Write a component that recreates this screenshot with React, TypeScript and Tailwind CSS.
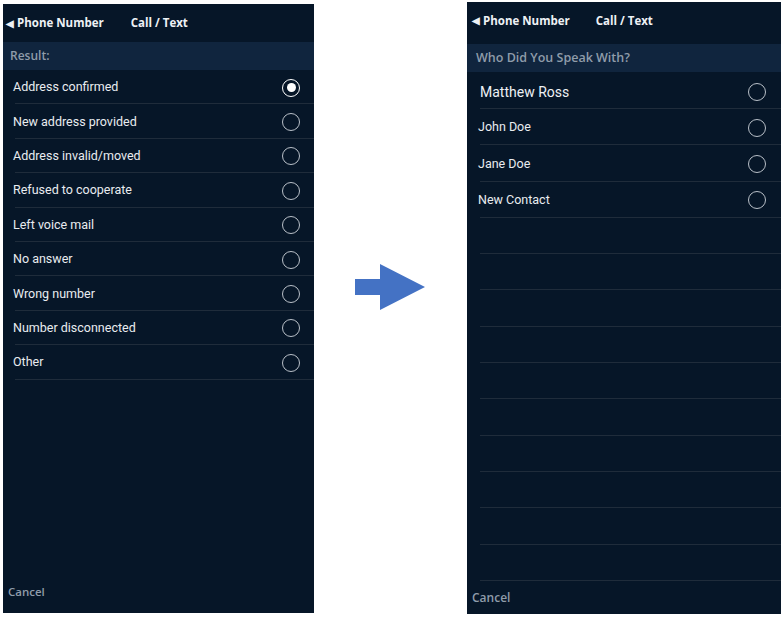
const leftOptions = [
  "Address confirmed",
  "New address provided",
  "Address invalid/moved",
  "Refused to cooperate",
  "Left voice mail",
  "No answer",
  "Wrong number",
  "Number disconnected",
  "Other",
];

const contacts = ["John Doe", "Jane Doe", "New Contact"];

// Montserrat-like headings; Open Sans is the widest close match installed
const head = { fontFamily: "'Open Sans', Lato, sans-serif" };
const body = { fontFamily: "Roboto, 'Liberation Sans', sans-serif" };

function Radio({ checked = false }: { checked?: boolean }) {
  return (
    <span
      className={`flex h-[18px] w-[18px] items-center justify-center rounded-full border-[1.5px] ${
        checked ? "border-white" : "border-[#b9c0c8]"
      }`}
    >
      {checked && <span className="h-[9px] w-[9px] rounded-full bg-white" />}
    </span>
  );
}

function TopBar({ gap, className }: { gap: string; className: string }) {
  return (
    <div className={`flex items-center text-[11.5px] font-bold text-[#eef1f5] ${className}`} style={head}>
      <span className="flex items-center gap-[3px]">
        <span className="text-[10px]">◀</span>
        <span>Phone Number</span>
      </span>
      <span className={gap}>Call / Text</span>
    </div>
  );
}

function LeftPanel() {
  return (
    <div className="ml-[3px] mt-[4px] flex h-[609px] w-[311px] flex-col bg-[#061628]">
      <TopBar gap="ml-[27px]" className="h-[38px] pl-[3px]" />
      <div className="flex h-[28px] items-center bg-[#10253e] pl-[7px] text-[12px] font-semibold text-[#8f9caa]" style={head}>
        Result:
      </div>
      {leftOptions.map((o, i) => (
        <div key={o} className="flex h-[34.4px] pl-[12px]">
          <div className="flex flex-1 items-center border-b border-[#1f2c3b] pt-[2px]">
            <span className="-ml-[2px] flex-1 text-[12.5px] text-[#e9ecf0]" style={body}>
              {o}
            </span>
            <span className="mr-[14px]">
              <Radio checked={i === 0} />
            </span>
          </div>
        </div>
      ))}
      <div className="flex-1" />
      <div className="pb-[13px] pl-[5px] text-[11.5px] font-semibold text-[#8f9caa]" style={head}>
        Cancel
      </div>
    </div>
  );
}

function RightPanel() {
  return (
    <div className="mt-[2px] flex h-[612px] w-[314px] flex-col bg-[#061628]">
      <TopBar gap="ml-[26px]" className="h-[42px] pb-[5px] pl-[5px]" />
      <div className="flex h-[28px] items-center bg-[#10253e] pl-[9px] text-[12.5px] font-semibold text-[#8f9caa]" style={head}>
        Who Did You Speak With?
      </div>
      <div className="flex h-[37px] pl-[13px]">
        <div className="flex flex-1 items-center border-b border-[#1f2c3b] pt-[5px]">
          <span className="flex-1 text-[14px] text-[#eef1f5]" style={body}>
            Matthew Ross
          </span>
          <span className="mr-[15px] -mt-[2px]">
            <Radio />
          </span>
        </div>
      </div>
      {contacts.map((c) => (
        <div key={c} className="flex h-[36.3px] pl-[13px]">
          <div className="flex flex-1 items-center border-b border-[#1f2c3b] pt-[2px]">
            <span className="-ml-[2px] flex-1 text-[12.5px] text-[#e9ecf0]" style={body}>
              {c}
            </span>
            <span className="mr-[15px]">
              <Radio />
            </span>
          </div>
        </div>
      ))}
      {Array.from({ length: 10 }).map((_, i) => (
        <div key={i} className="flex h-[36.3px] pl-[13px]">
          <div className="flex-1 border-b border-[#1f2c3b]" />
        </div>
      ))}
      <div className="flex-1" />
      <div className="pb-[7px] pl-[5px] text-[12px] font-semibold text-[#8f9caa]" style={head}>
        Cancel
      </div>
    </div>
  );
}

function Arrow() {
  return (
    <div className="flex w-[153px] items-center pl-[41px] pt-[2px]">
      <svg width="72" height="46" viewBox="0 0 72 46">
        <path d="M0 15 H25 V0 L70 23 L25 46 V31 H0 Z" fill="#4472c4" />
      </svg>
    </div>
  );
}

export default function App() {
  return (
    <div className="flex h-[619px] w-[784px] items-start bg-white">
      <LeftPanel />
      <div className="flex h-[572px] items-center">
        <Arrow />
      </div>
      <RightPanel />
    </div>
  );
}
